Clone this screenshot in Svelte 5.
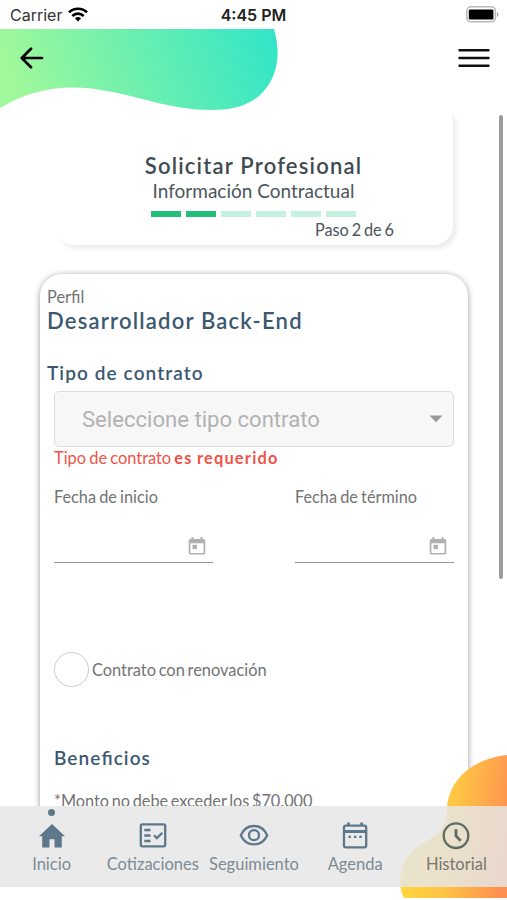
<script>
    const currentStep = 2;
    const steps = [1, 2, 3, 4, 5, 6];

    let dates = [
        { id: 'start', label: 'Fecha de inicio' },
        { id: 'end', label: 'Fecha de término' },
    ];

    let tabs = [
        { name: 'Inicio', icon: 'home', active: true },
        { name: 'Cotizaciones', icon: 'quotes' },
        { name: 'Seguimiento', icon: 'eye' },
        { name: 'Agenda', icon: 'calendar' },
        { name: 'Historial', icon: 'clock' },
    ];
</script>

<div class="phone">
    <svg class="blob-top" width="280" height="82" viewBox="0 0 280 82">
        <defs>
            <linearGradient id="green" x1="0" y1="0.1" x2="1" y2="0">
                <stop offset="0" stop-color="#9ff89b" />
                <stop offset="1" stop-color="#30e5c8" />
            </linearGradient>
        </defs>
        <path d="M0 0H274C281 24 278 47 263 63C250 77 232 81 211 81C173 81 145 69 107 62C65 54 32 60 0 79Z" fill="url(#green)" />
    </svg>

    <div class="status-bar">
        <div class="carrier">
            Carrier
            <svg width="20" height="15" viewBox="0 0 20 15" fill="none" stroke="#000" stroke-width="2.7">
                <path d="M1 5.4C6 .5 14 .5 19 5.4" />
                <path d="M4.3 9C7.6 5.8 12.4 5.8 15.7 9" />
                <path d="M6.9 11.2Q10 8.7 13.1 11.2L10 14.4Z" fill="#000" stroke="none" />
            </svg>
        </div>
        <div class="time">4:45 PM</div>
        <div class="battery">
            <svg width="33" height="17" viewBox="0 0 33 17">
                <rect x=".8" y=".8" width="28.6" height="15" rx="4.2" fill="#fff" stroke="#bbb" stroke-width="1.6" />
                <rect x="2.8" y="3.4" width="24.6" height="10" rx="1.2" fill="#000" />
                <path d="M31 6V11Q32.5 10 32.5 8.5T31 6Z" fill="#aaa" />
            </svg>
        </div>
    </div>

    <header>
        <button aria-label="Volver">
            <svg width="24" height="22" viewBox="0 0 24 22" fill="none" stroke="#000" stroke-width="2.7" stroke-linecap="round" stroke-linejoin="round">
                <path d="M11 1.7L1.8 11L11 20.3M2 11H22" />
            </svg>
        </button>
        <button aria-label="Menú">
            <svg width="32" height="20" viewBox="0 0 32 20" stroke="#111" stroke-width="2.4" stroke-linecap="round">
                <path d="M1.5 2.2H30.5M1.5 10H30.5M1.5 17.8H30.5" />
            </svg>
        </button>
    </header>

    <main>
        <section class="summary">
            <h1>Solicitar Profesional</h1>
            <p class="subtitle">Información Contractual</p>
            <div class="steps">
                {#each steps as step}
                    <span class:done={step <= currentStep}></span>
                {/each}
            </div>
            <p class="step-text">Paso {currentStep} de {steps.length}</p>
        </section>

        <section class="form">
            <p class="profile">Perfil</p>
            <h2>Desarrollador Back-End</h2>
            <h3 class="contract">Tipo de contrato</h3>
            <div class="fields">
                <div class="select">
                    <span>Seleccione tipo contrato</span>
                    <svg width="14" height="8" viewBox="0 0 14 8"><path d="M.5 .5H13.5L7 7.2Z" fill="#999" /></svg>
                </div>
                <p class="error">Tipo de contrato <b>es requerido</b></p>

                <div class="dates">
                    {#each dates as date (date.id)}
                        <div class="date">
                            <div class="label">{date.label}</div>
                            <div class="input">
                                <svg width="18" height="20" viewBox="0 0 18 20" fill="#b0b0b0">
                                    <path d="M3.5 1H5.4V3H12.6V1H14.5V3H15.5Q17.3 3 17.3 4.8V16.8Q17.3 18.6 15.5 18.6H2.5Q.7 18.6 .7 16.8V4.8Q.7 3 2.5 3H3.5ZM2.4 7.2V16.9H15.6V7.2Z" fill-rule="evenodd" />
                                    <rect x="4.5" y="8.8" width="4.4" height="4.2" />
                                </svg>
                            </div>
                        </div>
                    {/each}
                </div>

                <label class="renewal">
                    <span class="radio"></span>
                    Contrato con renovación
                </label>

                <h3 class="benefits">Beneficios</h3>
                <p class="note">*Monto no debe exceder los $70.000</p>
            </div>
        </section>
    </main>

    <div class="scrollbar"></div>

    <svg class="blob-bottom" width="109" height="144" viewBox="0 0 109 144">
        <defs>
            <linearGradient id="orange" x1="0" y1="0.4" x2="1" y2="0.6">
                <stop offset="0" stop-color="#ffdc3d" />
                <stop offset="0.5" stop-color="#ffc444" />
                <stop offset="1" stop-color="#ff9050" />
            </linearGradient>
        </defs>
        <path d="M109 0C72 4 50 27 49 54C50 84 27 82 14 97C1 110 -1 130 6 143H109Z" fill="url(#orange)" />
    </svg>

    <nav>
        {#each tabs as tab}
            <div class="tab">
                {#if tab.active}<i class="dot"></i>{/if}
                <svg width="30" height="30" viewBox="0 0 30 30" fill="none" stroke="#5d788b" stroke-width="2.3">
                    {#if tab.icon === 'home'}
                        <path d="M15 3L28 15.2H24.8V26.5H17.5V18.2H12.5V26.5H5.2V15.2H2Z" fill="#5d788b" stroke="none" />
                    {:else if tab.icon === 'quotes'}
                        <rect x="2.8" y="3.4" width="24.4" height="22" rx="1.6" />
                        <path d="M6.3 9H12.5M6.3 14.5H12.5M6.3 20H12.5M16 14.2L18.9 17.1L24.3 11.7" />
                    {:else if tab.icon === 'eye'}
                        <path d="M1.8 14.2C7.2 1.9 22.8 1.9 28.2 14.2C22.8 26.5 7.2 26.5 1.8 14.2Z" />
                        <circle cx="15" cy="14.2" r="5" />
                    {:else if tab.icon === 'calendar'}
                        <rect x="4" y="4.6" width="22.2" height="21.8" rx="1.8" />
                        <path d="M4 10.5H26.2M8.5 1.5V5M21.7 1.5V5" stroke-width="2.8" />
                        <path d="M8.5 15.8H11M13.9 15.8H16.4M19.3 15.8H21.8" />
                    {:else}
                        <g stroke="#5c6b64">
                            <circle cx="15" cy="14.7" r="12.3" />
                            <path d="M15 8.3V15L19.7 19.7" stroke-width="2.8" />
                        </g>
                    {/if}
                </svg>
                <span>{tab.name}</span>
            </div>
        {/each}
    </nav>
</div>

<style>
    :global(body) {
        margin: 0;
        background: #fff;
    }

    .phone {
        position: relative;
        display: flex;
        flex-direction: column;
        width: 507px;
        height: 900px;
        overflow: hidden;
        font-family: Lato, sans-serif;
        color: #737373;
    }

    h1, h2, h3, p {
        margin: 0;
    }

    .blob-top {
        position: absolute;
        top: 29px;
        left: 0;
    }

    .status-bar {
        display: grid;
        grid-template-columns: 1fr auto 1fr;
        align-items: center;
        height: 29px;
        padding: 0 8px 0 10px;
        box-sizing: border-box;
        font-family: Inter, sans-serif;
        font-size: 16px;
        color: #333;
    }

    .carrier {
        display: flex;
        align-items: center;
        gap: 6px;
    }

    .time {
        margin-right: 2px;
        font-weight: 600;
        color: #222;
    }

    .battery {
        display: flex;
        justify-content: flex-end;
    }

    header {
        position: relative;
        display: flex;
        flex: none;
        justify-content: space-between;
        align-items: center;
        height: 86px;
        padding: 0 17px 29px 20px;
        box-sizing: border-box;
    }

    button {
        display: flex;
        padding: 0;
        border: none;
        background: none;
    }

    main {
        height: 691px;
        overflow: hidden;
    }

    .summary {
        width: 399px;
        height: 142px;
        margin: -12px 0 0 54px;
        padding-top: 49px;
        box-sizing: border-box;
        border-radius: 20px;
        background: #fff;
        box-shadow: 4px 4px 4px #eee;
        text-align: center;
        color: #4b565c;
    }

    h1 {
        font-size: 22px;
        font-weight: 600;
        line-height: 28px;
        letter-spacing: 1.2px;
        color: #3f4b52;
    }

    .subtitle {
        font-size: 19px;
        line-height: 22px;
    }

    .steps {
        display: flex;
        justify-content: center;
        gap: 5px;
        margin-top: 9px;
    }

    .steps span {
        width: 30px;
        height: 6px;
        background: #c5f1df;
    }

    .steps .done {
        background: #24bf7a;
    }

    .step-text {
        margin: 3px 59px 0 0;
        text-align: right;
        font-size: 16.3px;
        line-height: 20px;
        word-spacing: -1.3px;
    }

    .form {
        width: 428px;
        height: 640px;
        margin: 29px 0 0 40px;
        padding: 13px 7px 0;
        box-sizing: border-box;
        border-radius: 22px;
        background: #fff;
        box-shadow: 0 1px 6px #999;
    }

    .profile {
        font-size: 16.4px;
        line-height: 20px;
    }

    h2 {
        font-size: 22px;
        font-weight: 600;
        line-height: 27px;
        letter-spacing: 1.2px;
        color: #3c5870;
    }

    h3 {
        font-size: 19px;
        font-weight: 600;
        line-height: 24px;
        letter-spacing: 1.1px;
        color: #3c5870;
        font-feature-settings: "liga" 1;
    }

    .contract {
        margin-top: 27px;
    }

    .fields {
        margin: 6px 7px 0;
    }

    .select {
        display: flex;
        justify-content: space-between;
        align-items: center;
        height: 56px;
        padding: 0 10px 0 27px;
        box-sizing: border-box;
        border: 1px solid #ddd;
        border-radius: 5px;
        background: #f7f7f7;
        font-family: Roboto, sans-serif;
        font-size: 22.1px;
        color: #b2b2b2;
    }

    .error {
        font-size: 16.4px;
        line-height: 22px;
        word-spacing: -1px;
        color: #f15349;
    }

    .error b {
        letter-spacing: 1.2px;
    }

    .dates {
        display: flex;
        justify-content: space-between;
        margin-top: 17px;
    }

    .date {
        width: 159px;
    }

    .label {
        font-size: 16.3px;
        line-height: 22px;
        word-spacing: -1px;
    }

    .input {
        display: flex;
        justify-content: flex-end;
        height: 55px;
        padding: 28px 7px 0 0;
        box-sizing: border-box;
        border-bottom: 1.5px solid #999;
    }

    .renewal {
        display: flex;
        align-items: center;
        gap: 3px;
        margin-top: 89px;
        font-size: 16.4px;
        line-height: 20px;
        word-spacing: -1.5px;
    }

    .radio {
        width: 35px;
        height: 35px;
        margin-bottom: 1px;
        box-sizing: border-box;
        border: 1.5px solid #ccc;
        border-radius: 50%;
    }

    .benefits {
        margin-top: 58px;
    }

    .note {
        margin-top: 20px;
        font-size: 16.3px;
        line-height: 22px;
        word-spacing: -1.5px;
    }

    .scrollbar {
        position: absolute;
        top: 115px;
        right: 4px;
        width: 4px;
        height: 464px;
        border-radius: 2px;
        background: #9c9c9c;
    }

    .blob-bottom {
        position: absolute;
        right: 0;
        bottom: 1px;
    }

    nav {
        position: relative;
        display: grid;
        grid-template-columns: repeat(5, 101.2px);
        height: 81px;
        padding-left: 1px;
        background: rgba(230, 230, 230, 0.84);
        color: #7c8b95;
    }

    .tab {
        position: relative;
        display: flex;
        flex-direction: column;
        align-items: center;
        padding-top: 15px;
        font-size: 16.5px;
        line-height: 22px;
    }

    .tab span {
        margin-top: 2px;
    }

    .tab:last-child {
        color: #77776f;
    }

    .dot {
        position: absolute;
        top: 3px;
        width: 7px;
        height: 7px;
        border-radius: 50%;
        background: #5d788b;
    }
</style>
